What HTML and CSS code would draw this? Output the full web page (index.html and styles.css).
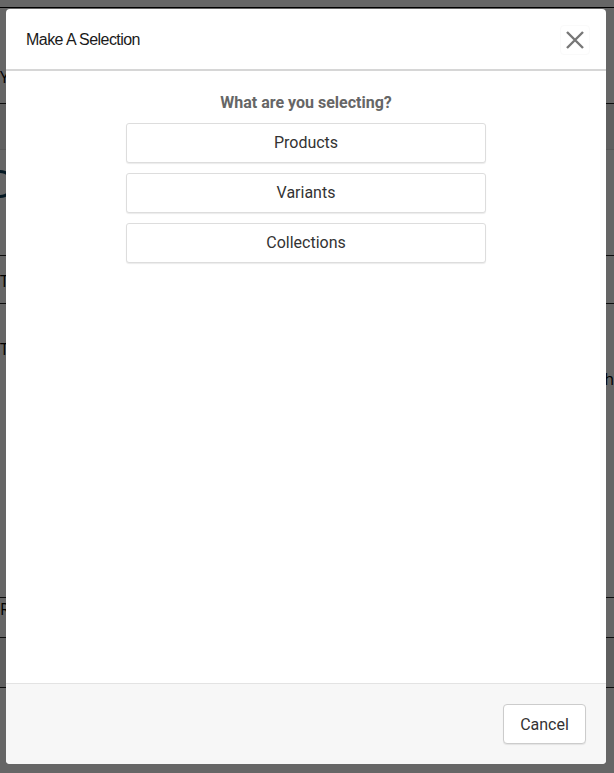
FILE: index.html
```html
<!DOCTYPE html>
<html>
<head>
<meta charset="utf-8">
<link rel="stylesheet" href="styles.css">
</head>
<body>
<div class="page">
  <div class="bg-top"></div>
  <div class="bg-row r1"><span class="peek">Yo</span></div>
  <div class="bg-band"></div>
  <div class="bg-row r2"><span class="ring"></span></div>
  <div class="bg-row r3"><span class="peek">Th</span></div>
  <div class="bg-row r4"></div>
  <div class="bg-row r5"><span class="peek">Th</span><span class="peek right">th</span></div>
  <div class="bg-row r6"><span class="peek">R</span></div>
  <div class="bg-row r7"></div>
  <div class="bg-row r8"><span class="count">1 product</span></div>
</div>
<div class="overlay"></div>
<div class="modal">
  <div class="modal-header">
    <h1 class="modal-title">Make A Selection</h1>
    <button class="close" aria-label="Close">
      <svg width="18" height="18" viewBox="0 0 18 18"><path d="M1 1 L17 17 M17 1 L1 17" stroke="#777" stroke-width="2.4" stroke-linecap="butt"/></svg>
    </button>
  </div>
  <div class="modal-body">
    <h2 class="question">What are you selecting?</h2>
    <div class="choices">
      <button class="choice">Products</button>
      <button class="choice">Variants</button>
      <button class="choice">Collections</button>
    </div>
  </div>
  <div class="modal-footer">
    <button class="cancel">Cancel</button>
  </div>
</div>
</body>
</html>
```

FILE: styles.css
```css
* { box-sizing: border-box; }
html, body { margin: 0; padding: 0; }
body {
  width: 614px;
  height: 773px;
  overflow: hidden;
  background: #fff;
  font-family: Roboto, "Liberation Sans", sans-serif;
  position: relative;
}
.page {
  display: flex;
  flex-direction: column;
  width: 614px;
}
.bg-top { height: 8px; border-bottom: 1px solid #000; }
.bg-row { position: relative; border-bottom: 1px solid #222; font-size: 16px; color: #000; }
.r1 { height: 96px; padding-top: 58px; }
.bg-band { height: 46px; background: #f0f0f0; border-bottom: 1px solid #ddd; }
.r2 { height: 106px; padding: 20px 0 0 0; }
.ring { display: block; width: 28px; height: 28px; border: 3px solid #0b3d57; border-radius: 50%; margin-left: -14px; }
.r3 { height: 48px; padding-top: 14px; }
.r4 { height: 12px; border-bottom: none; }
.r5 { height: 282px; padding-top: 22px; }
.r6 { height: 40px; }
.r7 { height: 50px; background: #eee; }
.r8 { height: 80px; padding-top: 50px; border-bottom: none; }
.peek { font-family: "Open Sans", sans-serif; }
.peek.right { position: absolute; right: 0; top: 52px; }
.count { margin-left: 44px; }

.overlay {
  position: absolute;
  inset: 0;
  background: rgba(0, 0, 0, 0.6);
}
.modal {
  position: absolute;
  left: 6px;
  top: 9px;
  width: 600px;
  height: 755px;
  background: #fff;
  border-radius: 4px;
  display: flex;
  flex-direction: column;
  overflow: hidden;
}
.modal-header {
  height: 62px;
  flex: none;
  display: flex;
  align-items: center;
  justify-content: space-between;
  padding: 0 16px 0 20px;
  border-bottom: 2px solid #d6d6d6;
}
.modal-title {
  margin: 0;
  font-family: "Liberation Sans", Arial, sans-serif;
  font-weight: normal;
  font-size: 16px;
  letter-spacing: -0.55px;
  color: #1a1a1a;
  padding-top: 2px;
}
.close {
  width: 30px;
  height: 30px;
  padding: 0;
  border: 1px solid #fafafa;
  border-radius: 4px;
  background: #fff;
  display: flex;
  align-items: center;
  justify-content: center;
  margin-top: 1px;
}
.close svg { display: block; }
.modal-body {
  flex: 1;
  display: flex;
  flex-direction: column;
  align-items: center;
  padding-top: 21px;
  background: #fff;
}
.question {
  margin: 0 0 9px 0;
  font-family: Roboto, sans-serif;
  font-weight: bold;
  font-size: 16px;
  line-height: 22px;
  color: #666;
}
.choices {
  display: flex;
  flex-direction: column;
  gap: 10px;
  width: 360px;
}
.choice {
  height: 40px;
  width: 100%;
  background: #fff;
  border: 1px solid #ddd;
  border-radius: 3px;
  box-shadow: 0 1px 1px rgba(0,0,0,0.08);
  font-family: Roboto, sans-serif;
  font-size: 16px;
  color: #333;
  padding: 0 0 2px 0;
}
.modal-footer {
  height: 81px;
  flex: none;
  background: #f7f7f7;
  border-top: 1px solid #e3e3e3;
  display: flex;
  justify-content: flex-end;
  align-items: flex-start;
  padding: 20px 20px 0 0;
}
.cancel {
  width: 83px;
  height: 40px;
  background: #fff;
  border: 1px solid #ccc;
  border-radius: 4px;
  box-shadow: 0 1px 1px rgba(0,0,0,0.08);
  font-family: Roboto, sans-serif;
  font-size: 16px;
  color: #333;
  padding: 0;
}
```
